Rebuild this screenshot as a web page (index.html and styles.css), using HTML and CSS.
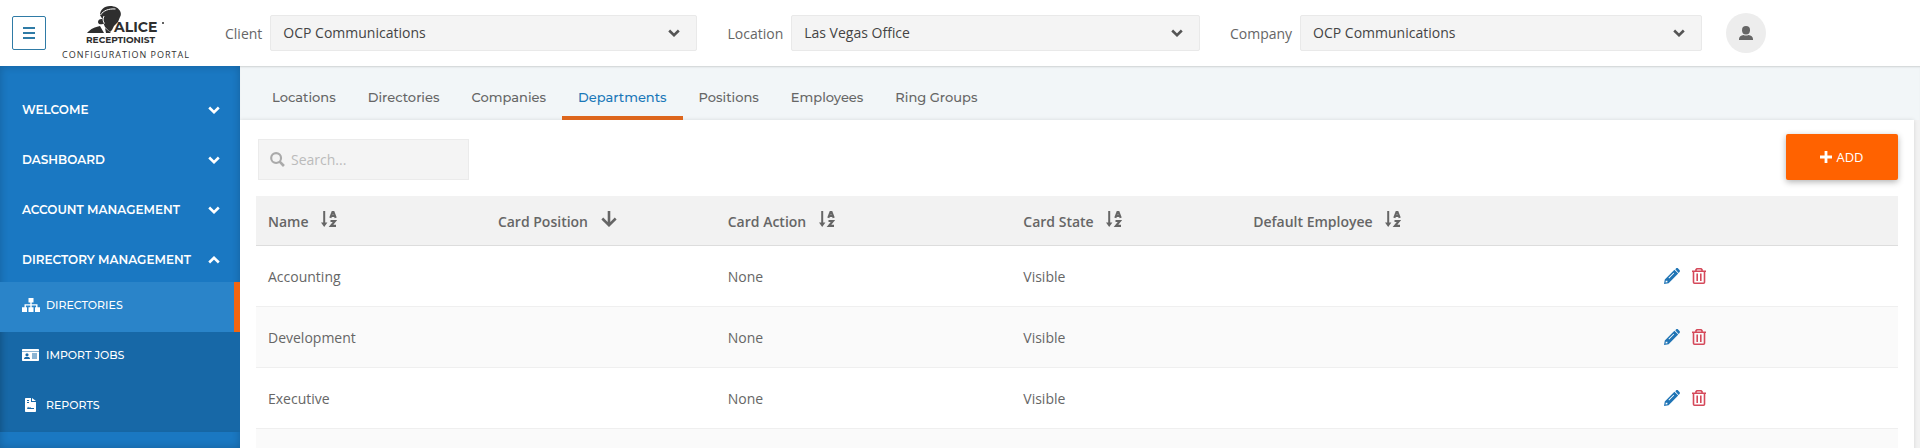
FILE: index.html
```html
<!DOCTYPE html>
<html lang="en">
<head>
    <meta charset="UTF-8">
    <meta name="viewport" content="width=device-width, initial-scale=1.0">
    <title>Departments - Configuration Portal</title>
    <link rel="stylesheet" href="styles.css">
</head>
<body>
    <!-- Shared icons -->
    <svg class="icon-defs" width="0" height="0" aria-hidden="true">
        <symbol id="chevron" viewBox="0 0 12 8">
            <path d="M1.2 1.5 6 6.200l4.800-4.700" fill="none" stroke="currentColor" stroke-width="2.600"/>
        </symbol>
        <symbol id="sort-az" viewBox="0 0 16 16">
            <path d="M2.200 0h2v11.500h2.200L3.200 16 0 11.500h2.200z" fill="currentColor"/>
            <path d="M9.300 6.800 11.500 1.200h1l2.200 5.600M10.200 5h3.600M9.500 10h4.500l-4 4.800h5" fill="none" stroke="currentColor" stroke-width="2.200"/>
        </symbol>
        <symbol id="arrow-down" viewBox="0 0 16 16">
            <path d="M8 0v14M1.300 7.500 8 14.200l6.700-6.700" fill="none" stroke="currentColor" stroke-width="2.600"/>
        </symbol>
        <symbol id="pencil" viewBox="0 0 16 16">
            <path fill="currentColor" fill-rule="evenodd" d="M11.300 1.200 12 .5c.6-.6 1.500-.6 2.100 0l1.400 1.400c.6.6.6 1.500 0 2.100l-.9.900zM10.400 1.800l3.800 3.800L4.600 15.200 0 16l.8-4.600zM1.800 12.600l-.3 1.900 1.900-.3v-1.400H1.900zM9.600 4.700 4.500 9.800l.6.6 5.100-5.100z"/>
        </symbol>
        <symbol id="trash" viewBox="0 0 14 16">
            <path d="M0 3.200h14M4 3V1.600L4.900.8h4.200l.9.800V3M1.500 3.500v10.700c0 .6.4 1 1 1h9c.6 0 1-.4 1-1V3.500M5.200 5.500v7.500M8.800 5.500v7.500" fill="none" stroke="currentColor" stroke-width="1.600"/>
        </symbol>
    </svg>

    <header class="topbar">
        <button class="menu-toggle" aria-label="Toggle menu">
            <svg width="12" height="12" viewBox="0 0 12 12"><path d="M0 1h12M0 6h12M0 11h12" stroke="currentColor" stroke-width="2"/></svg>
        </button>

        <a class="brand" href="#">
            <svg class="logo" width="90" height="40" viewBox="0 0 90 40" role="img" aria-label="Alice Receptionist">
                <!-- bonnet, face and flower -->
                <path fill="#2e2e2e" d="M19 11c0-5 4-9 10-9 5 0 9 2 10.500 6 .7 2 .3 4-.5 5L37 18l-4 4-2 4-2 2-5-5-1.500-3.500c-2 1.500-5.500 1-5.500-1.500s3-3.500 5-2.500c-1-1.500-1.800-2-3-4.500z"/>
                <path fill="none" stroke="#fff" stroke-width="1" d="M19.500 11c3-4.500 8-6.500 15-6M23 12c-1.500 3-1 5.500 .5 7.500"/>
                <!-- shoulders -->
                <path fill="#2e2e2e" d="M6 29c4-4.500 8-6 13-7l4 7zM24 24l6 5h-5z"/>
                <text x="33" y="28" class="logo-name">ALICE</text>
                <circle cx="82" cy="19" r="1" fill="#2e2e2e"/>
                <text x="5" y="39" class="logo-sub">RECEPTIONIST</text>
            </svg>
            <span class="brand-caption">CONFIGURATION PORTAL</span>
        </a>

        <div class="filters">
            <div class="filter">
                <label for="client">Client</label>
                <div class="select-wrap">
                    <select id="client"><option>OCP Communications</option></select>
                    <svg class="chevron"><use href="#chevron"/></svg>
                </div>
            </div>
            <div class="filter">
                <label for="location">Location</label>
                <div class="select-wrap">
                    <select id="location"><option>Las Vegas Office</option></select>
                    <svg class="chevron"><use href="#chevron"/></svg>
                </div>
            </div>
            <div class="filter">
                <label for="company">Company</label>
                <div class="select-wrap">
                    <select id="company"><option>OCP Communications</option></select>
                    <svg class="chevron"><use href="#chevron"/></svg>
                </div>
            </div>
        </div>

        <button class="avatar" aria-label="Account">
            <svg width="14" height="14" viewBox="0 0 14 14" fill="currentColor"><ellipse cx="7" cy="4.200" rx="4" ry="4.200"/><path d="M0 14v-1c0-2.500 2-3.500 4.500-4 1.500.8 3.500.8 5 0 2.500.5 4.500 1.500 4.500 4v1z"/></svg>
        </button>
    </header>

    <div class="layout">
        <nav class="sidebar">
            <button class="menu-item">WELCOME <svg class="chevron"><use href="#chevron"/></svg></button>
            <button class="menu-item">DASHBOARD <svg class="chevron"><use href="#chevron"/></svg></button>
            <button class="menu-item">ACCOUNT MANAGEMENT <svg class="chevron"><use href="#chevron"/></svg></button>
            <button class="menu-item open">DIRECTORY MANAGEMENT <svg class="chevron"><use href="#chevron"/></svg></button>
            <div class="submenu">
                <a class="active" href="#">
                    <svg width="18" height="14" viewBox="0 0 18 14" fill="currentColor"><path d="M6.500 0h5v4.500H9.700v1.700h5.800v3H18V14h-5V9.200h1.100V7.500H9.700v1.700h1.800V14h-5V9.200h1.800V7.500H3.900v1.700H5V14H0V9.200h2.500v-3h5.800V4.500H6.500z"/></svg>
                    DIRECTORIES
                </a>
                <a href="#">
                    <svg width="18" height="14" viewBox="0 0 18 14"><path fill="currentColor" fill-rule="evenodd" d="M1 1h15c.6 0 1 .4 1 1v1H0V2c0-.6.4-1 1-1zM0 3.500h17V12c0 .6-.4 1-1 1H1c-.6 0-1-.4-1-1zM2 11h6c0-1.500-1-2-2-2H4c-1 0-2 .5-2 2zM5 5.200a1.600 1.600 0 1 0 0 3.200 1.600 1.600 0 0 0 0-3.200zM10 5.500v1h5v-1zM10 7.500v1h5v-1zM10 9.500v1h5v-1z"/></svg>
                    IMPORT JOBS
                </a>
                <a href="#">
                    <svg width="18" height="14" viewBox="0 0 18 14"><path fill="currentColor" fill-rule="evenodd" d="M4 0h5v4h5v9c0 .6-.4 1-1 1H4c-.6 0-1-.4-1-1V1c0-.6.400-1 1-1zM10 0l4 3h-4zM5 2v1h2V2zM5 4v1h2V4zM5 11h7v-1H9l-1-1-1 1-1-1.500z"/></svg>
                    REPORTS
                </a>
            </div>
        </nav>

        <main class="content">
            <nav class="tabs">
                <a href="#">Locations</a>
                <a href="#">Directories</a>
                <a href="#">Companies</a>
                <a href="#" class="active">Departments</a>
                <a href="#">Positions</a>
                <a href="#">Employees</a>
                <a href="#">Ring Groups</a>
            </nav>

            <section class="panel">
                <div class="toolbar">
                    <div class="search">
                        <svg width="15" height="15" viewBox="0 0 14 14"><path d="M9 9l4 4" stroke="currentColor" stroke-width="2.500"/><circle cx="5.700" cy="5.700" r="4.600" fill="none" stroke="currentColor" stroke-width="2"/></svg>
                        <input type="text" placeholder="Search..." aria-label="Search">
                    </div>
                    <button class="add-button">
                        <svg width="12" height="12" viewBox="0 0 12 12"><path d="M6 0v12M0 6h12" stroke="currentColor" stroke-width="2.800"/></svg>
                        ADD
                    </button>
                </div>

                <table>
                    <colgroup>
                        <col class="col-name">
                        <col class="col-position">
                        <col class="col-action">
                        <col class="col-state">
                        <col class="col-employee">
                        <col>
                    </colgroup>
                    <thead>
                        <tr>
                            <th>Name <svg class="sort"><use href="#sort-az"/></svg></th>
                            <th>Card Position <svg class="sort"><use href="#arrow-down"/></svg></th>
                            <th>Card Action <svg class="sort"><use href="#sort-az"/></svg></th>
                            <th>Card State <svg class="sort"><use href="#sort-az"/></svg></th>
                            <th>Default Employee <svg class="sort"><use href="#sort-az"/></svg></th>
                            <th></th>
                        </tr>
                    </thead>
                    <tbody id="departments"></tbody>
                </table>
            </section>
        </main>
    </div>

    <script>
        const departments = [
            { name: "Accounting", action: "None", state: "Visible" },
            { name: "Development", action: "None", state: "Visible" },
            { name: "Executive", action: "None", state: "Visible" },
            { name: "", action: "", state: "" }
        ];

        const body = document.getElementById("departments");
        departments.forEach((dept) => {
            const row = document.createElement("tr");
            const buttons = dept.name ? `
                <button class="icon-button edit" aria-label="Edit ${dept.name}"><svg width="16" height="16"><use href="#pencil"/></svg></button>
                <button class="icon-button delete" aria-label="Delete ${dept.name}"><svg width="14" height="16"><use href="#trash"/></svg></button>` : "";
            row.innerHTML = `
                <td>${dept.name}</td>
                <td></td>
                <td>${dept.action}</td>
                <td>${dept.state}</td>
                <td></td>
                <td><div class="row-actions">${buttons}</div></td>
            `;
            body.appendChild(row);
        });
    </script>
</body>
</html>
```

FILE: styles.css
```css
* {
    box-sizing: border-box;
}

body {
    margin: 0;
    height: 100vh;
    overflow: hidden;
    display: flex;
    flex-direction: column;
    font-family: "Open Sans", sans-serif;
    font-size: 14px;
    color: #666;
    background: #fff;
}

button,
input,
select {
    font-family: inherit;
    font-size: inherit;
}

button {
    cursor: pointer;
}

a {
    text-decoration: none;
}

svg {
    display: block;
    flex-shrink: 0;
}

.icon-defs {
    position: absolute;
}

.chevron {
    width: 12px;
    height: 8px;
}

/* Top bar */
.topbar {
    display: flex;
    align-items: center;
    height: 66px;
    flex-shrink: 0;
    padding: 0 8% 0 12px;
    background: #fff;
}

.menu-toggle {
    display: flex;
    align-items: center;
    justify-content: center;
    width: 34px;
    height: 34px;
    padding: 0;
    border: 1px solid #2f7ba6;
    border-radius: 2px;
    background: #fff;
    color: #2f7ba6;
}

.brand {
    display: flex;
    flex-direction: column;
    align-items: center;
    width: 148px;
    margin: 0 16px 0 8px;
    padding-right: 4px;
    color: #333;
}

.logo-name,
.logo-sub {
    font-family: Montserrat, Inter, sans-serif;
    font-weight: 700;
    fill: #2e2e2e;
}

.logo-name {
    font-size: 14px;
}

.logo-sub {
    font-size: 9px;
}

.brand-caption {
    margin-top: 4px;
    font-size: 9px;
    line-height: 14px;
    letter-spacing: 1px;
    white-space: nowrap;
}

.filters {
    display: flex;
    flex: 1;
    gap: 30px;
    margin: 0 24px 0 7px;
}

.filter {
    display: flex;
    flex: 1;
    align-items: center;
    gap: 8px;
}

.select-wrap {
    position: relative;
    flex: 1;
}

.select-wrap select {
    appearance: none;
    width: 100%;
    height: 36px;
    padding: 0 40px 2px 12px;
    border: 1px solid #e9e9e9;
    border-radius: 2px;
    background: #f4f4f4;
    color: #444;
}

.select-wrap .chevron {
    position: absolute;
    right: 17px;
    top: 14px;
    color: #555;
    pointer-events: none;
}

.avatar {
    display: flex;
    align-items: center;
    justify-content: center;
    width: 40px;
    height: 40px;
    padding: 0;
    border: none;
    border-radius: 50%;
    background: #ededed;
    color: #666;
}

/* Sidebar */
.layout {
    display: flex;
    flex: 1;
    min-height: 0;
}

.sidebar {
    width: 240px;
    flex-shrink: 0;
    padding-top: 16px;
    background: #1a78c2;
    box-shadow: inset 0 0 8px rgba(0, 0, 0, 0.2);
    font-family: Montserrat, Inter, sans-serif;
    overflow: hidden;
}

.menu-item {
    display: flex;
    align-items: center;
    justify-content: space-between;
    width: 100%;
    height: 50px;
    padding: 5px 20px 0 22px;
    border: none;
    background: none;
    color: #fff;
    font-size: 12px;
    font-weight: 600;
}

.menu-item.open .chevron {
    transform: rotate(180deg);
}

.submenu {
    background: #1768a7;
    box-shadow: inset 6px 0 6px -4px rgba(0, 0, 0, 0.2);
}

.submenu a {
    display: flex;
    align-items: center;
    gap: 6px;
    height: 50px;
    padding: 0 22px 4px;
    color: #fff;
    font-size: 11px;
    font-weight: 500;
}

.submenu a.active {
    background: #2a84c9;
    border-right: 6px solid #f26511;
}

/* Tabs */
.content {
    flex: 1;
    min-width: 0;
    overflow: hidden;
    background: #f2f2f2;
}

.tabs {
    display: flex;
    height: 54px;
    padding-left: 16px;
    background: #f2f6f8;
    box-shadow: inset 0 2px 2px -1px rgba(0, 0, 0, 0.15);
    font-family: Montserrat, Inter, sans-serif;
}

.tabs a {
    display: flex;
    align-items: center;
    padding: 12px 16px 0;
    border-bottom: 4px solid transparent;
    color: #666;
    font-size: 13px;
    font-weight: 500;
}

.tabs a.active {
    color: #1a78b8;
    border-bottom-color: #dd661c;
}

/* Departments panel */
.panel {
    margin-right: 6px;
    padding: 14px 16px 0;
    background: #fff;
    box-shadow: 0 0 4px rgba(0, 0, 0, 0.12);
}

.toolbar {
    display: flex;
    align-items: flex-end;
    justify-content: space-between;
    height: 46px;
    margin-bottom: 16px;
}

.search {
    display: flex;
    align-items: center;
    gap: 6px;
    width: 211px;
    height: 41px;
    margin-left: 2px;
    padding: 0 11px;
    border: 1px solid #ebebeb;
    background: #f4f4f4;
    color: #aaa;
}

.search input {
    flex: 1;
    min-width: 0;
    padding: 0;
    border: none;
    outline: none;
    background: none;
}

.search input::placeholder {
    color: #bbb;
}

.add-button {
    display: flex;
    align-items: center;
    justify-content: center;
    gap: 4px;
    width: 112px;
    height: 46px;
    border: none;
    border-radius: 2px;
    background: #ff6200;
    box-shadow: 0 2px 6px rgba(0, 0, 0, 0.3);
    color: #fff;
    font-size: 13px;
}

table {
    width: 100%;
    table-layout: fixed;
    border-spacing: 0;
}

.col-name,
.col-position,
.col-state {
    width: 14%;
}

.col-action {
    width: 18%;
}

.col-employee {
    width: 25%;
}

th,
td {
    padding: 0 11px 0 12px;
    text-align: left;
    white-space: nowrap;
}

th {
    height: 50px;
    background: #f2f2f2;
    border-bottom: 1px solid #ddd;
    font-weight: 600;
}

.sort {
    display: inline-block;
    width: 16px;
    height: 16px;
    margin-left: 9px;
}

td {
    height: 61px;
    border-bottom: 1px solid #efefef;
}

tbody tr:nth-child(even) {
    background: #fafafa;
}

.row-actions {
    display: flex;
    gap: 12px;
}

.icon-button {
    padding: 0;
    border: none;
    background: none;
}

.icon-button.edit {
    color: #1f74b5;
}

.icon-button.delete {
    color: #d5495a;
}
```
